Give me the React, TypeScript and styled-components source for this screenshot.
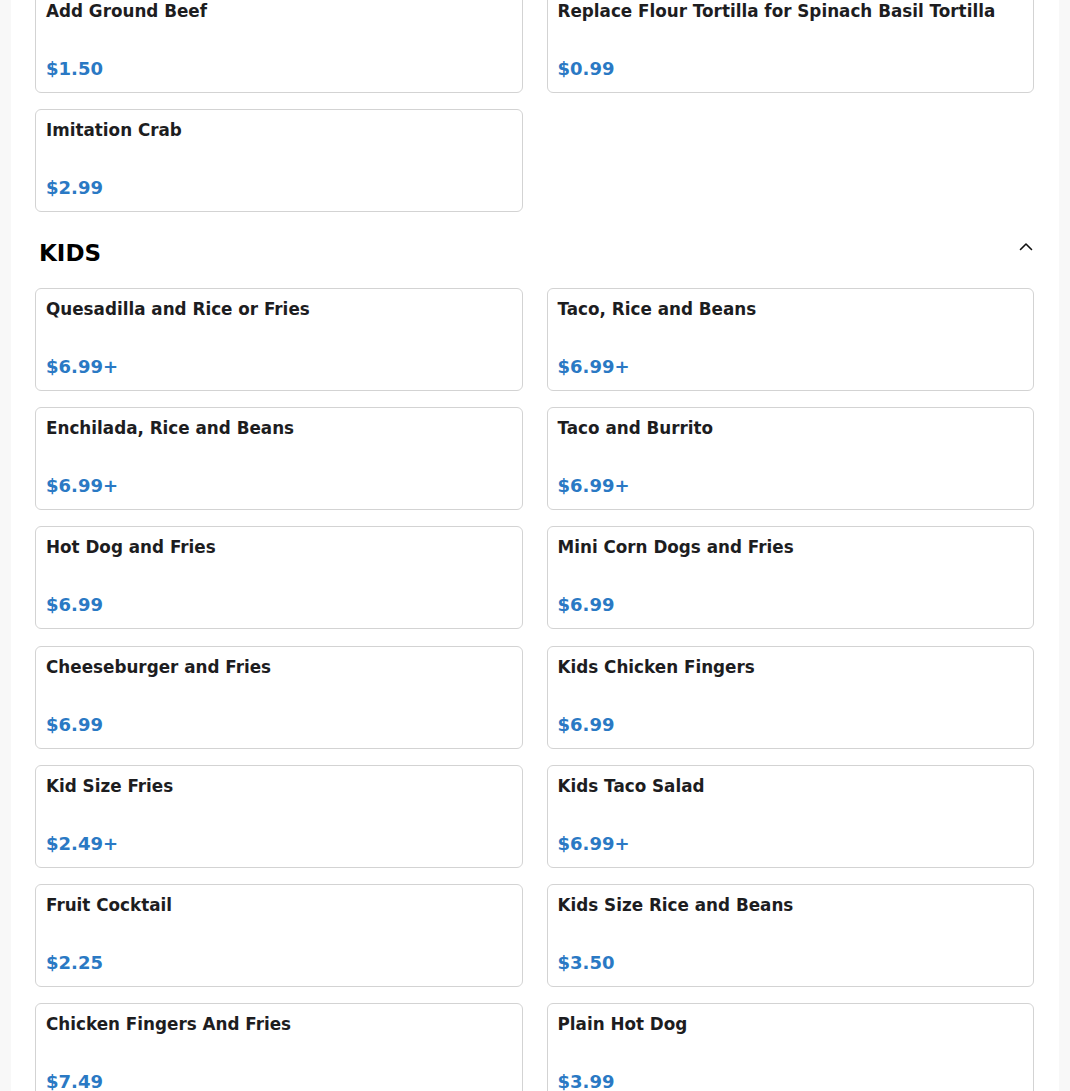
import React from 'react'
import styled, { createGlobalStyle } from 'styled-components'

type Item = {
  name: string
  price: string
}

const extras: Item[] = [
  { name: 'Add Ground Beef', price: '$1.50' },
  { name: 'Replace Flour Tortilla for Spinach Basil Tortilla', price: '$0.99' },
  { name: 'Imitation Crab', price: '$2.99' },
]

const kids: Item[] = [
  { name: 'Quesadilla and Rice or Fries', price: '$6.99+' },
  { name: 'Taco, Rice and Beans', price: '$6.99+' },
  { name: 'Enchilada, Rice and Beans', price: '$6.99+' },
  { name: 'Taco and Burrito', price: '$6.99+' },
  { name: 'Hot Dog and Fries', price: '$6.99' },
  { name: 'Mini Corn Dogs and Fries', price: '$6.99' },
  { name: 'Cheeseburger and Fries', price: '$6.99' },
  { name: 'Kids Chicken Fingers', price: '$6.99' },
  { name: 'Kid Size Fries', price: '$2.49+' },
  { name: 'Kids Taco Salad', price: '$6.99+' },
  { name: 'Fruit Cocktail', price: '$2.25' },
  { name: 'Kids Size Rice and Beans', price: '$3.50' },
  { name: 'Chicken Fingers And Fries', price: '$7.49' },
  { name: 'Plain Hot Dog', price: '$3.99' },
]

const ItemCard = ({ name, price }: Item) => (
  <Card>
    <Title>{name}</Title>
    <Price>{price}</Price>
  </Card>
)

const App = () => {
  return (
    <>
      <GlobalStyle />
      <Page>
        <Container>
          <Grid>
            {extras.map((item) => (
              <ItemCard key={item.name} {...item} />
            ))}
          </Grid>

          <SectionHeader>
            <SectionTitle>KIDS</SectionTitle>
            <Toggle aria-label="Collapse section">
              <svg width="16" height="16" viewBox="0 0 16 16" fill="none">
                <path
                  d="M2.5 10.5 L8 5 L13.5 10.5"
                  stroke="#111"
                  strokeWidth="1.6"
                  strokeLinecap="round"
                  strokeLinejoin="round"
                />
              </svg>
            </Toggle>
          </SectionHeader>

          <Grid>
            {kids.map((item) => (
              <ItemCard key={item.name} {...item} />
            ))}
          </Grid>
        </Container>
      </Page>
    </>
  )
}

export default App

const GlobalStyle = createGlobalStyle`
  body {
    margin: 0;
    background: #f8f8f8;
    font-family: 'DejaVu Sans', 'Noto Sans', sans-serif;
    overflow: hidden;
  }
`

const Page = styled.div`
  padding: 0 11px;
  height: 1091px;
  overflow: hidden;
`

const Container = styled.div`
  background: #ffffff;
  margin-top: -10px;
  padding: 0 25px 40px 24px;
  min-height: 1200px;
`

const Grid = styled.div`
  display: grid;
  grid-template-columns: 1fr 1fr;
  column-gap: 24px;
  row-gap: 16.17px;
`

const Card = styled.div`
  display: flex;
  flex-direction: column;
  min-height: 103px;
  box-sizing: border-box;
  padding: 9px 10px 11px;
  border: 1px solid #d3d3d3;
  border-radius: 6px;
  background: #fff;
`

const Title = styled.div`
  font-size: 16.8px;
  line-height: 22px;
  font-weight: 700;
  color: #1d1d1f;
`

const Price = styled.div`
  margin-top: auto;
  font-size: 18px;
  line-height: 24px;
  font-weight: 700;
  color: #2a79c4;
`

const SectionHeader = styled.div`
  display: flex;
  align-items: flex-start;
  justify-content: space-between;
  padding: 27px 0 21px 4px;
`

const SectionTitle = styled.h2`
  margin: 0;
  font-size: 23px;
  line-height: 28px;
  font-weight: 700;
  color: #000;
`

const Toggle = styled.button`
  display: flex;
  align-items: center;
  justify-content: center;
  width: 20px;
  height: 20px;
  margin: -2px -2px 0 0;
  padding: 0;
  border: none;
  background: transparent;
  cursor: pointer;
`
